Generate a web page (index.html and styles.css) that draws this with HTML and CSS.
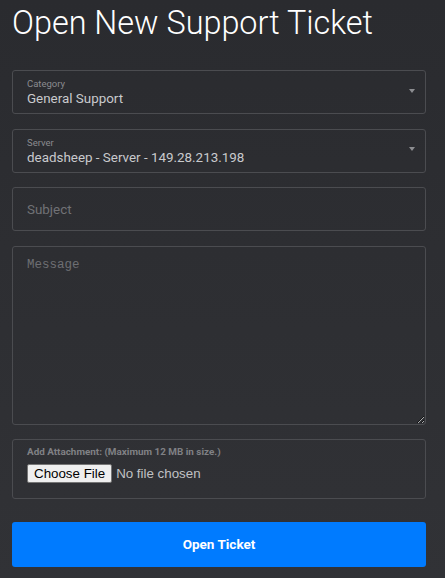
FILE: index.html
```html
<!DOCTYPE html>
<html>
<head>
<meta charset="utf-8">
<link rel="stylesheet" href="styles.css">
</head>
<body>
<div class="page">
  <h1 class="title">Open New Support Ticket</h1>
  <form class="form">
    <div class="field select-field">
      <div class="field-text">
        <span class="small-label">Category</span>
        <span class="value">General Support</span>
      </div>
      <span class="caret"></span>
    </div>
    <div class="field select-field">
      <div class="field-text">
        <span class="small-label">Server</span>
        <span class="value">deadsheep - Server - 149.28.213.198</span>
      </div>
      <span class="caret"></span>
    </div>
    <input class="field text-input" type="text" placeholder="Subject">
    <textarea class="field textarea" placeholder="Message"></textarea>
    <div class="field attach">
      <span class="attach-label">Add Attachment: (Maximum 12 MB in size.)</span>
      <div class="file-row">
        <span class="file-btn">Choose File</span>
        <span class="file-name">No file chosen</span>
      </div>
    </div>
    <button type="button" class="submit">Open Ticket</button>
  </form>
</div>
</body>
</html>
```
FILE: styles.css
```css
html, body {
  margin: 0;
  padding: 0;
}
body {
  width: 445px;
  height: 578px;
  overflow: hidden;
  background: linear-gradient(#2a2b2f, #313236);
  font-family: Roboto, "Liberation Sans", sans-serif;
}
.page {
  padding: 4px 19px 0 12px;
}
.title {
  margin: 0 0 28px 0;
  font-weight: 300;
  font-size: 32.4px;
  line-height: 38px;
  color: #ffffff;
}
.form {
  display: flex;
  flex-direction: column;
  gap: 14.6px;
}
.field {
  box-sizing: border-box;
  width: 414px;
  border: 1px solid #4b4c50;
  border-radius: 3px;
  background: transparent;
  margin: 0;
}
.select-field {
  height: 44px;
  display: flex;
  align-items: center;
  justify-content: space-between;
  padding: 0 10px 0 14px;
}
.field-text {
  display: flex;
  flex-direction: column;
  padding-top: 1px;
}
.small-label {
  font-size: 9.5px;
  line-height: 12px;
  color: #8a8b8f;
}
.value {
  font-size: 13.4px;
  line-height: 17px;
  color: #c9cacd;
}
.caret {
  width: 0;
  height: 0;
  border-left: 3.5px solid transparent;
  border-right: 3.5px solid transparent;
  border-top: 4px solid #8d8e91;
  margin-bottom: 3px;
}
.text-input {
  height: 44px;
  padding: 0 14px;
  font-family: Roboto, "Liberation Sans", sans-serif;
  font-size: 13.4px;
  color: #c9cacd;
  outline: none;
}
.text-input::placeholder {
  color: #717276;
}
.textarea {
  height: 179px;
  padding: 11px 14px;
  font-family: "Liberation Mono", monospace;
  font-size: 12.5px;
  color: #c9cacd;
  resize: vertical;
  outline: none;
  display: block;
}
.textarea::placeholder {
  color: #6e6f73;
}
.attach {
  height: 60px;
  padding: 5px 14px 0 14px;
  display: flex;
  flex-direction: column;
}
.attach-label {
  font-size: 9.9px;
  font-weight: 700;
  line-height: 14px;
  color: #808185;
}
.file-row {
  display: flex;
  align-items: center;
  gap: 4px;
  margin-top: 5px;
}
.file-btn {
  box-sizing: border-box;
  height: 19px;
  padding: 0 6px;
  background: #efefef;
  border: 1px solid #767676;
  border-radius: 2px;
  font-family: "Liberation Sans", Arial, sans-serif;
  font-size: 13.33px;
  line-height: 17px;
  color: #000;
}
.file-name {
  font-family: "Liberation Sans", Arial, sans-serif;
  font-size: 13.33px;
  color: #c0c1c4;
}
.submit {
  margin-top: 8px;
  width: 414px;
  height: 45px;
  border: none;
  border-radius: 3px;
  background: #007bff;
  color: #ffffff;
  font-family: Roboto, "Liberation Sans", sans-serif;
  font-weight: 700;
  font-size: 13.5px;
  cursor: pointer;
}
```
